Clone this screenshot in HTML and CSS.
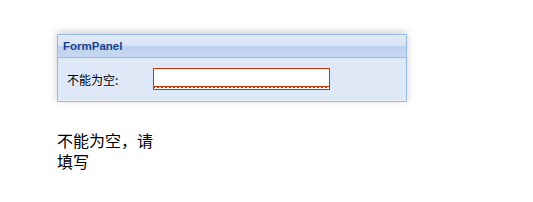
FILE: index.html
```html
<!DOCTYPE html>
<html lang="zh">
<head>
    <meta charset="UTF-8">
    <title>FormPanel</title>
    <link rel="stylesheet" href="styles.css">
</head>
<body>
    <div class="panel">
        <div class="panel-header">FormPanel</div>
        <div class="panel-body">
            <div class="form-item">
                <label for="field">不能为空:</label>
                <input type="text" id="field" class="invalid">
            </div>
        </div>
    </div>

    <div class="message">不能为空，请填写</div>
</body>
</html>
```
FILE: styles.css
```css
body {
    margin: 0;
    padding: 34px 0 0 57px;
    background-color: #fff;
    font-family: "Noto Sans CJK SC", sans-serif;
}
.panel {
    width: 348px;
    border: 1px solid #99bbe8;
    box-shadow: 0 -2px 8px rgba(0, 0, 0, 0.2);
}
.panel-header {
    height: 22px;
    line-height: 22px;
    padding-left: 5px;
    border-bottom: 1px solid #99bbe8;
    background: linear-gradient(#e3ebf7, #d6e2f4 50%, #bdd2ef 50%, #c6d8f1);
    color: #15428b;
    font-family: "Liberation Sans", sans-serif;
    font-size: 11.5px;
    font-weight: bold;
}
.panel-body {
    background-color: #dfe8f6;
    padding: 10px 9px 10px 9px;
    border-bottom: 1px solid #e8eef8;
}
.form-item {
    display: flex;
    align-items: center;
}
label {
    width: 86px;
    font-size: 12px;
    color: #000;
    font-family: "Noto Sans CJK SC", sans-serif;
}
input {
    width: 177px;
    height: 22px;
    margin: 0;
    padding: 0 3px;
    box-sizing: border-box;
    border: 1px solid #b5b8c8;
    background-color: #fff;
    outline: none;
}
input.invalid {
    border-color: #cc3300;
    background-image:
        linear-gradient(135deg, #cc3300 30%, transparent 30%),
        linear-gradient(225deg, #cc3300 30%, transparent 30%);
    background-size: 4px 3px;
    background-repeat: repeat-x;
    background-position: left bottom;
}
.message {
    width: 100px;
    margin-top: 28px;
    font-size: 16px;
    line-height: 21px;
    color: #000;
}
```
